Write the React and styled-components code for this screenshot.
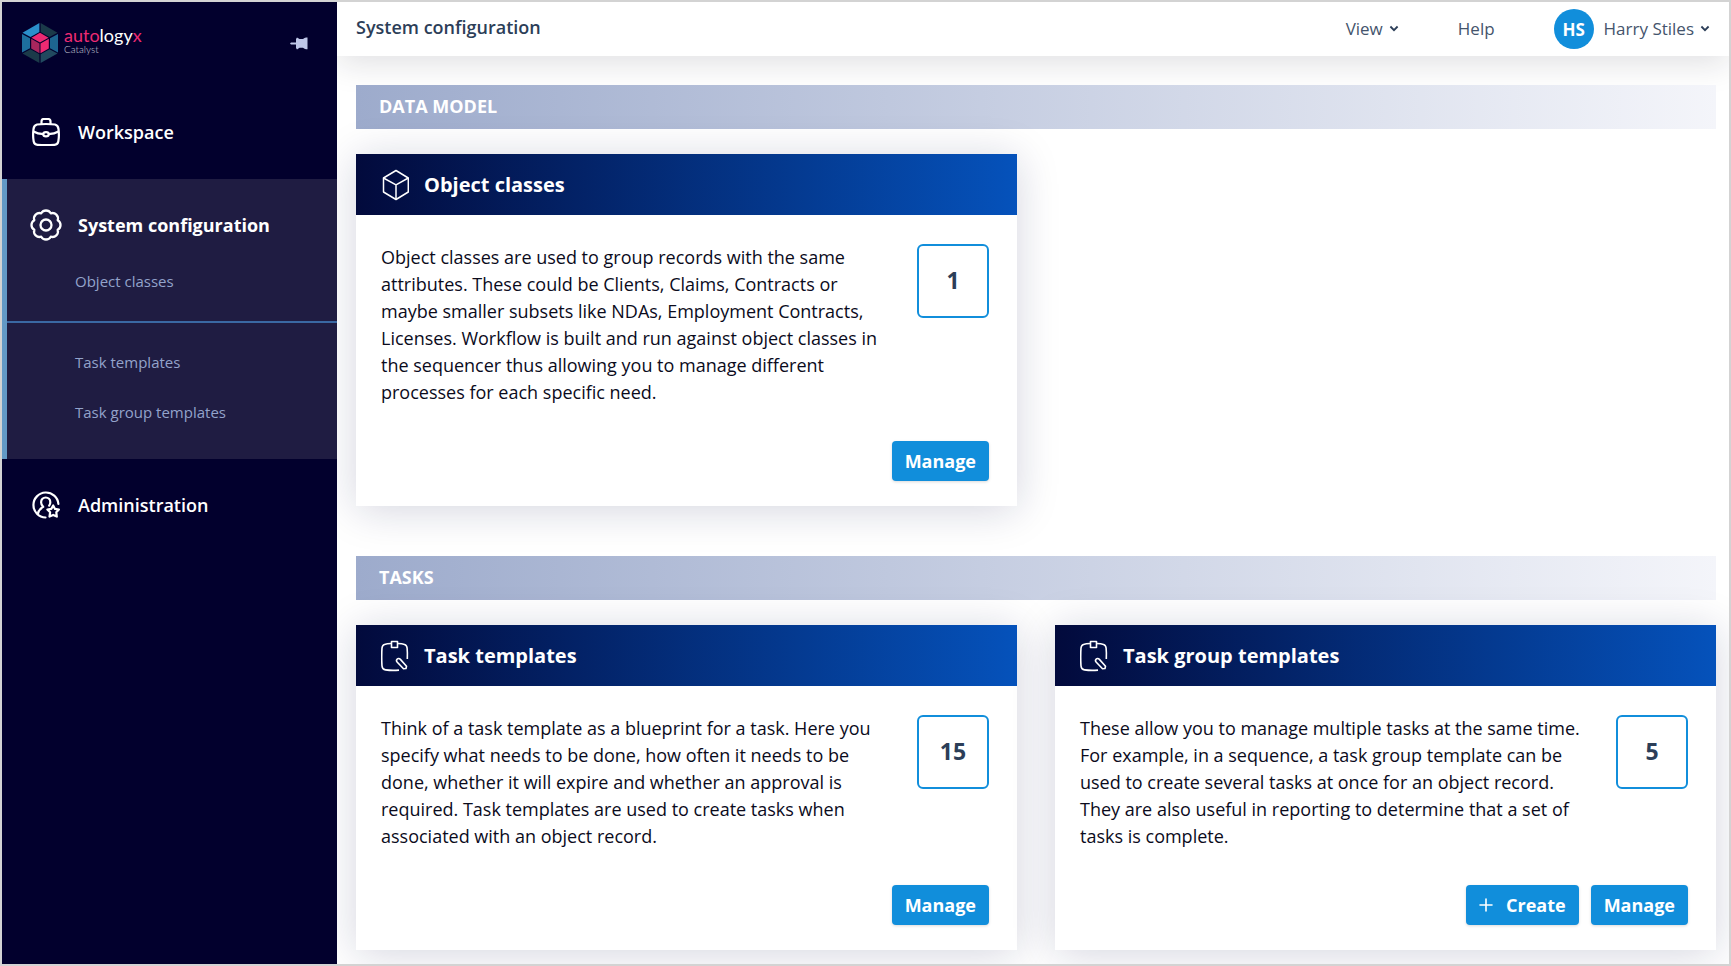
import React from 'react';
import styled, { createGlobalStyle } from 'styled-components';

const BriefcaseIcon = () => (
    <svg width="28" height="28" viewBox="0 0 28 28" fill="none" stroke="#fff" strokeWidth="2.200" strokeLinejoin="round" aria-hidden="true">
        <path d="M5 6.5C9 5.8 19 5.8 23 6.5C25.300 7 26.200 8.500 26.500 11C27 15 27 20 26.300 23.500C25.900 25.800 25 26.600 22.500 26.800C17 27.300 11 27.300 5.500 26.800C3 26.600 2.100 25.800 1.700 23.500C1 20 1 15 1.500 11C1.800 8.500 2.700 7 5 6.500Z" />
        <path d="M9.500 6V3.500C9.500 1.800 10.300 1 12 1H16C17.700 1 18.500 1.800 18.500 3.500V6" />
        <path d="M1.500 13.500C4.500 15.300 8 16 11.500 16.200M26.500 13.500C23.500 15.300 20 16 16.500 16.200" />
        <ellipse cx="14" cy="16.200" rx="2.700" ry="2.100" />
    </svg>
);

const GearIcon = () => (
    <svg width="32" height="32" viewBox="0 0 32 32" fill="none" stroke="#fff" strokeWidth="2.300" strokeLinejoin="round" aria-hidden="true">
        <path d="M11.200 4.300A5.500 5.500 0 0 1 20.800 4.300A5.500 5.500 0 0 1 27.700 11.200A5.500 5.500 0 0 1 27.700 20.800A5.500 5.500 0 0 1 20.800 27.700A5.500 5.500 0 0 1 11.200 27.700A5.500 5.500 0 0 1 4.300 20.800A5.500 5.500 0 0 1 4.300 11.200A5.500 5.500 0 0 1 11.200 4.300Z" />
        <circle cx="16" cy="16" r="5.500" />
    </svg>
);

const AdminIcon = () => (
    <svg width="28" height="28" viewBox="0 0 28 28" fill="none" stroke="#fff" strokeWidth="2.200" strokeLinejoin="round" strokeLinecap="round" aria-hidden="true">
        <path d="M13.500 26.500A12.500 12.500 0 1 1 26.400 13" />
        <path d="M6 22.500C6.500 19.300 8.500 17.500 11.200 15.800C9.700 14.500 9.100 13 9.100 11.200C9.100 8.300 11.100 6.500 13.700 6.500S18.300 8.300 18.300 11.200C18.300 12.600 18 13.600 17.200 14.700" />
        <path d="M21.200 14.500L23 17.900L26.900 18.500L24.300 21.300L24.800 25.600L21.200 23.900L17.500 25.600L18.100 21.300L15.400 18.500L19.300 17.900Z" />
    </svg>
);

const CubeIcon = () => (
    <svg width="28" height="32" viewBox="0 0 28 32" fill="none" stroke="#fff" strokeWidth="1.500" strokeLinejoin="round" aria-hidden="true">
        <path d="M15 1.500L27.300 9V23L15 30.500L2.500 23V9Z" />
        <path d="M2.500 9L15 15.800L27.300 9M15 15.800V30.500" />
    </svg>
);

const ClipboardIcon = () => (
    <svg width="28" height="32" viewBox="0 0 28 32" fill="none" stroke="#fff" strokeWidth="1.600" strokeLinejoin="round" aria-hidden="true">
        <path d="M10 3.500C7 3.700 5 4 3.500 4.400C1.800 4.900 1.200 6 1 8C.6 14 .6 20 1 26C1.200 28.600 2 29.600 4.500 29.900C9 30.500 14 30.500 18 30.100" />
        <path d="M17 3.500C20 3.700 22 4 23.500 4.400C25.200 4.900 25.900 6 26.100 8C26.500 12 26.500 15 26.300 19" />
        <path d="M10.500 1.500H16.500V7.500H10.500Z" />
        <path d="M16 19.300C17 18.200 18.400 18.300 19.400 19.400L25.500 26.300L25 28.500L22.500 28.700L16.300 22.300C15.400 21.300 15.200 20.200 16 19.300Z" />
    </svg>
);

const PinIcon = () => (
    <svg width="18" height="13" viewBox="0 0 18 13" fill="#bec6e8" aria-hidden="true">
        <path d="M0 6.500L1 5.500H6V2L7 .5L9.500 2H13L14.500 1L16 .5H17.500V12.300H16L14.500 11.800L13 10.800H9.500L7 12.500L6 11V7.500H1Z" />
    </svg>
);

const LogoMark = () => (
    <svg width="36" height="40" viewBox="0 0 36 40" aria-hidden="true">
        <path fill="#2b8fcb" d="M17.400 0V9L8.500 14L.5 9.800Z" />
        <path fill="#1b3a49" d="M18.600 0L35.500 9.800L27.500 14L18.600 9Z" />
        <path fill="#1d6f9e" d="M0 11L8 15.300V25.200L0 29.500Z" />
        <path fill="#1d6590" d="M36 11L28 15.300V25.200L36 29.500Z" />
        <path fill="#1b3a49" d="M.5 30.600L8.500 26.300L17.400 31.300V40Z" />
        <path fill="#21495f" d="M35.500 30.600L27.500 26.300L18.600 31.300V40Z" />
        <path fill="#ed2a72" d="M18 9.800L26.500 14.700L18 19.600L9.500 14.700Z" />
        <path fill="#a8265d" d="M9.200 15.700L17.500 20.500V30.300L9.200 25.500Z" />
        <path fill="#ed2a72" d="M26.800 15.700L18.500 20.500V30.300L26.800 25.500Z" />
    </svg>
);

const Chevron = () => (
    <svg width="10" height="7" viewBox="0 0 10 7" fill="none" stroke="#2c3e58" strokeWidth="1.800" aria-hidden="true">
        <path d="M1.400 1.500L5 5.200L8.600 1.500" />
    </svg>
);

const PlusIcon = () => (
    <svg width="14" height="14" viewBox="0 0 14 14" stroke="#fff" strokeWidth="1.600" strokeLinecap="round" aria-hidden="true">
        <path d="M7 1V13M1 7H13" />
    </svg>
);

const sections = [
    {
        title: 'DATA MODEL',
        cards: [
            {
                title: 'Object classes',
                icon: <CubeIcon />,
                count: 1,
                description: 'Object classes are used to group records with the same attributes. These could be Clients, Claims, Contracts or maybe smaller subsets like NDAs, Employment Contracts, Licenses. Workflow is built and run against object classes in the sequencer thus allowing you to manage different processes for each specific need.',
            },
        ],
    },
    {
        title: 'TASKS',
        cards: [
            {
                title: 'Task templates',
                icon: <ClipboardIcon />,
                count: 15,
                description: 'Think of a task template as a blueprint for a task. Here you specify what needs to be done, how often it needs to be done, whether it will expire and whether an approval is required. Task templates are used to create tasks when associated with an object record.',
            },
            {
                title: 'Task group templates',
                icon: <ClipboardIcon />,
                count: 5,
                description: 'These allow you to manage multiple tasks at the same time. For example, in a sequence, a task group template can be used to create several tasks at once for an object record. They are also useful in reporting to determine that a set of tasks is complete.',
                canCreate: true,
            },
        ],
    },
];

const App = () => {
    return (
        <>
            <GlobalStyle />
            <Page>
                <Sidebar>
                    <Brand>
                        <Logo href="#">
                            <LogoMark />
                            <LogoText>
                                <LogoName><em>auto</em>logy<em>x</em></LogoName>
                                <LogoSub>Catalyst</LogoSub>
                            </LogoText>
                        </Logo>
                        <IconButton type="button" aria-label="Pin menu"><PinIcon /></IconButton>
                    </Brand>

                    <nav>
                        <NavSection>
                            <NavLink href="#"><NavIcon><BriefcaseIcon /></NavIcon>Workspace</NavLink>
                        </NavSection>
                        <NavSection $active>
                            <NavLink href="#" $active><NavIcon><GearIcon /></NavIcon>System configuration</NavLink>
                            <SubList>
                                <li><SubLink href="#">Object classes</SubLink></li>
                            </SubList>
                            <SubList $divided>
                                <li><SubLink href="#">Task templates</SubLink></li>
                                <li><SubLink href="#">Task group templates</SubLink></li>
                            </SubList>
                        </NavSection>
                        <NavSection>
                            <NavLink href="#"><NavIcon><AdminIcon /></NavIcon>Administration</NavLink>
                        </NavSection>
                    </nav>
                </Sidebar>

                <Main>
                    <Header>
                        <h1>System configuration</h1>
                        <Menu>
                            <MenuButton type="button">View <Chevron /></MenuButton>
                            <MenuLink href="#">Help</MenuLink>
                            <User>
                                <Avatar>HS</Avatar>
                                <MenuButton type="button">Harry Stiles <Chevron /></MenuButton>
                            </User>
                        </Menu>
                    </Header>

                    <Content>
                        {sections.map(section => (
                            <section key={section.title}>
                                <SectionTitle>{section.title}</SectionTitle>
                                <CardGrid>
                                    {section.cards.map(card => (
                                        <Card key={card.title}>
                                            <CardHeader>
                                                {card.icon}
                                                <h3>{card.title}</h3>
                                            </CardHeader>
                                            <CardBody>
                                                <CardInfo>
                                                    <p>{card.description}</p>
                                                    <Count>{card.count}</Count>
                                                </CardInfo>
                                                <Actions>
                                                    {card.canCreate && <Button type="button"><PlusIcon />Create</Button>}
                                                    <Button type="button">Manage</Button>
                                                </Actions>
                                            </CardBody>
                                        </Card>
                                    ))}
                                </CardGrid>
                            </section>
                        ))}
                    </Content>
                </Main>
            </Page>
        </>
    );
};

export default App;

const GlobalStyle = createGlobalStyle`
    * {
        box-sizing: border-box;
        margin: 0;
        padding: 0;
    }
    body {
        font-family: "Open Sans", "Noto Sans", sans-serif;
        font-size: 18px;
        color: #0b0b1c;
        background-color: #fff;
    }
    a {
        color: inherit;
        text-decoration: none;
    }
    ul {
        list-style: none;
    }
    button {
        border: 0;
        background: none;
        font: inherit;
        color: inherit;
        cursor: pointer;
    }
    svg {
        display: block;
        flex-shrink: 0;
    }
`;

const Page = styled.div`
    display: grid;
    grid-template-columns: 335px minmax(0, 1fr);
    min-height: 100vh;
    border: 2px solid #d3d3d3;
`;

const Sidebar = styled.aside`
    background-color: #02002d;
    color: #fff;
`;

const Brand = styled.div`
    display: flex;
    align-items: center;
    justify-content: space-between;
    height: 84px;
    padding: 0 29px 2px 20px;
`;

const Logo = styled.a`
    display: flex;
    align-items: center;
    gap: 6px;
`;

const LogoText = styled.span`
    display: flex;
    flex-direction: column;
    padding-bottom: 6px;
    font-family: Lato, sans-serif;
`;

const LogoName = styled.span`
    font-size: 18px;
    line-height: 18px;

    em {
        font-style: normal;
        color: #ed2a72;
    }
`;

const LogoSub = styled.span`
    font-size: 10px;
    font-weight: 300;
    line-height: 10px;
    color: #c9c9d8;
`;

const IconButton = styled.button`
    display: flex;
`;

const NavSection = styled.div`
    padding: ${({ $active }) => ($active ? '15px 0 0' : '15px 0 16px')};
    border-left: 5px solid ${({ $active }) => ($active ? '#6299c6' : 'transparent')};
    background-color: ${({ $active }) => ($active ? '#1f1c42' : 'transparent')};
`;

const NavLink = styled.a`
    display: flex;
    align-items: center;
    gap: 16px;
    height: 62px;
    padding-left: 23px;
    font-weight: ${({ $active }) => ($active ? 700 : 600)};
`;

const NavIcon = styled.span`
    display: flex;
    justify-content: center;
    width: 32px;
`;

const SubList = styled.ul`
    padding: ${({ $divided }) => ($divided ? '14px 0 22px' : '0 0 15px')};
    border-top: ${({ $divided }) => ($divided ? '2px solid #3a68a3' : '0')};
`;

const SubLink = styled.a`
    display: flex;
    align-items: center;
    height: 50px;
    padding-left: 68px;
    font-size: 15px;
    color: #93a3cb;
`;

const Main = styled.div`
    overflow: hidden;
`;

const Header = styled.header`
    display: flex;
    align-items: center;
    justify-content: space-between;
    height: 54px;
    padding: 0 19px;
    color: #2c3e58;
    box-shadow: 0 8px 32px rgba(20, 25, 35, 0.13);

    h1 {
        padding-bottom: 4px;
        font-size: 18px;
        font-weight: 600;
    }
`;

const Menu = styled.div`
    display: flex;
    align-items: center;
    gap: 59px;
    font-size: 17px;
`;

const MenuButton = styled.button`
    display: flex;
    align-items: center;
    gap: 6px;
    padding-bottom: 2px;
    color: #44546c;
`;

const MenuLink = styled.a`
    padding-bottom: 2px;
    color: #44546c;
`;

const User = styled.div`
    display: flex;
    align-items: center;
    gap: 10px;
`;

const Avatar = styled.span`
    display: flex;
    align-items: center;
    justify-content: center;
    width: 40px;
    height: 40px;
    border-radius: 50%;
    background-color: #118edb;
    font-weight: 700;
    color: #fff;
`;

const Content = styled.main`
    display: grid;
    gap: 50px;
    padding: 29px 13px 14px 19px;
`;

const SectionTitle = styled.h2`
    padding: 0 23px 2px;
    background: linear-gradient(to right, #9dabcc, #f4f5fa);
    font-size: 18px;
    font-weight: 700;
    line-height: 42px;
    color: #fff;
`;

const CardGrid = styled.div`
    display: grid;
    grid-template-columns: repeat(2, minmax(0, 1fr));
    gap: 38px;
    margin-top: 25px;
`;

const Card = styled.article`
    background-color: #fff;
    box-shadow: 0 4px 40px rgba(15, 20, 80, 0.18);
`;

const CardHeader = styled.div`
    display: flex;
    align-items: center;
    gap: 15px;
    height: 61px;
    padding: 0 25px;
    background: linear-gradient(to right, #020a3c, #0552bb);
    color: #fff;

    h3 {
        font-size: 20px;
        font-weight: 700;
    }
`;

const CardBody = styled.div`
    padding: 29px 28px 25px 25px;
`;

const CardInfo = styled.div`
    display: flex;
    align-items: flex-start;
    justify-content: space-between;
    gap: 27px;

    p {
        line-height: 27px;
    }
`;

const Count = styled.div`
    display: flex;
    align-items: center;
    justify-content: center;
    flex-shrink: 0;
    width: 72px;
    height: 74px;
    padding-bottom: 2px;
    border: 2px solid #118edb;
    border-radius: 6px;
    font-size: 23px;
    font-weight: 700;
    color: #2c3e58;
`;

const Actions = styled.div`
    display: flex;
    justify-content: flex-end;
    gap: 12px;
    margin-top: 35px;
`;

const Button = styled.button`
    display: flex;
    align-items: center;
    gap: 13px;
    height: 40px;
    padding: 0 13px;
    border-radius: 4px;
    background-color: #118edb;
    box-shadow: 0 1px 3px rgba(0, 0, 0, 0.15);
    font-weight: 700;
    color: #fff;
`;
